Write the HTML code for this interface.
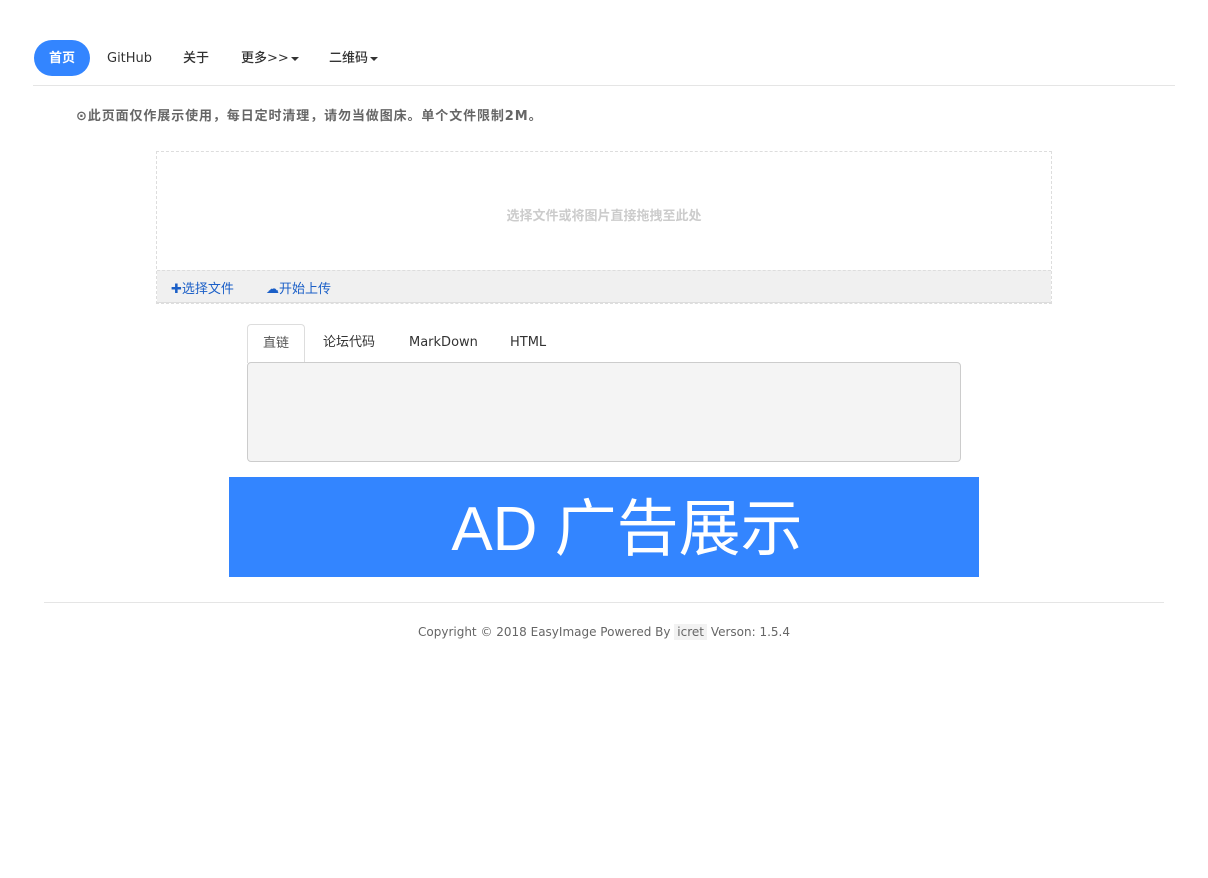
<!DOCTYPE html>
<html><head><meta charset="utf-8"><style>
*{box-sizing:border-box}
body{margin:0;background:#fff;font-family:"DejaVu Sans","Liberation Sans","Noto Sans CJK SC",sans-serif;font-size:13px;color:#333;width:1208px;height:878px;position:relative;overflow:hidden}
.a{position:absolute}
.nav a{position:absolute;top:40px;height:36px;line-height:38px;font-size:13px;color:#333;white-space:nowrap;font-weight:500}
.car{display:inline-block;width:0;height:0;border-left:4px solid transparent;border-right:4px solid transparent;border-top:4px solid #333;vertical-align:middle;margin-left:2px}
.tab{position:absolute;top:335px;line-height:16px}
</style></head><body>
<div class="nav">
<a style="left:34px;width:56px;background:#3385ff;border-radius:18px;color:#fff;text-align:center;font-weight:bold">首页</a>
<a style="left:107px">GitHub</a>
<a style="left:183px">关于</a>
<a style="left:241px">更多&gt;&gt;<span class="car"></span></a>
<a style="left:329px">二维码<span class="car"></span></a>
</div>
<div class="a" style="left:33px;top:85px;width:1142px;border-top:1px solid #e5e5e5"></div>
<div class="a" style="left:76px;top:105px;font-size:13px;color:#666;font-weight:bold;letter-spacing:0.9px">⊙此页面仅作展示使用，每日定时清理，请勿当做图床。单个文件限制2M。</div>
<div class="a" style="left:156px;top:151px;width:896px;height:153px;border:1px dashed #ddd"></div>
<div class="a" style="left:156px;top:205px;width:896px;text-align:center;color:#ccc;font-size:13px;font-weight:bold">选择文件或将图片直接拖拽至此处</div>
<div class="a" style="left:157px;top:270px;width:894px;height:33px;background:#f0f0f0;border-top:1px dashed #ddd;border-bottom:1px solid #ddd"></div>
<div class="a" style="left:171px;top:278px;color:#1b5fc7;font-size:13px">✚选择文件</div>
<div class="a" style="left:266px;top:278px;color:#1b5fc7;font-size:13px">☁开始上传</div>
<div class="a" style="left:247px;top:324px;width:58px;height:39px;border:1px solid #ddd;border-bottom:none;border-radius:4px 4px 0 0;background:#fff;text-align:center;line-height:38px;color:#555">直链</div>
<div class="tab" style="left:323px">论坛代码</div>
<div class="tab" style="left:409px">MarkDown</div>
<div class="tab" style="left:510px">HTML</div>
<div class="a" style="left:247px;top:362px;width:714px;height:100px;background:#f4f4f4;border:1px solid #ccc;border-radius:4px"></div>
<div class="a" style="left:229px;top:477px;width:750px;height:100px;background:#3385ff;color:#fff;text-align:center;line-height:106px;font-size:62px;padding-left:46px;font-family:'Liberation Sans','Noto Sans CJK SC',sans-serif">AD 广告展示</div>
<div class="a" style="left:44px;top:602px;width:1120px;border-top:1px solid #e5e5e5"></div>
<div class="a" style="left:0;top:625px;width:1208px;text-align:center;font-size:12px;color:#666">Copyright © 2018 EasyImage Powered By <span style="background:#f2f2f2;padding:1px 3px">icret</span> Verson: 1.5.4</div>
</body></html>
